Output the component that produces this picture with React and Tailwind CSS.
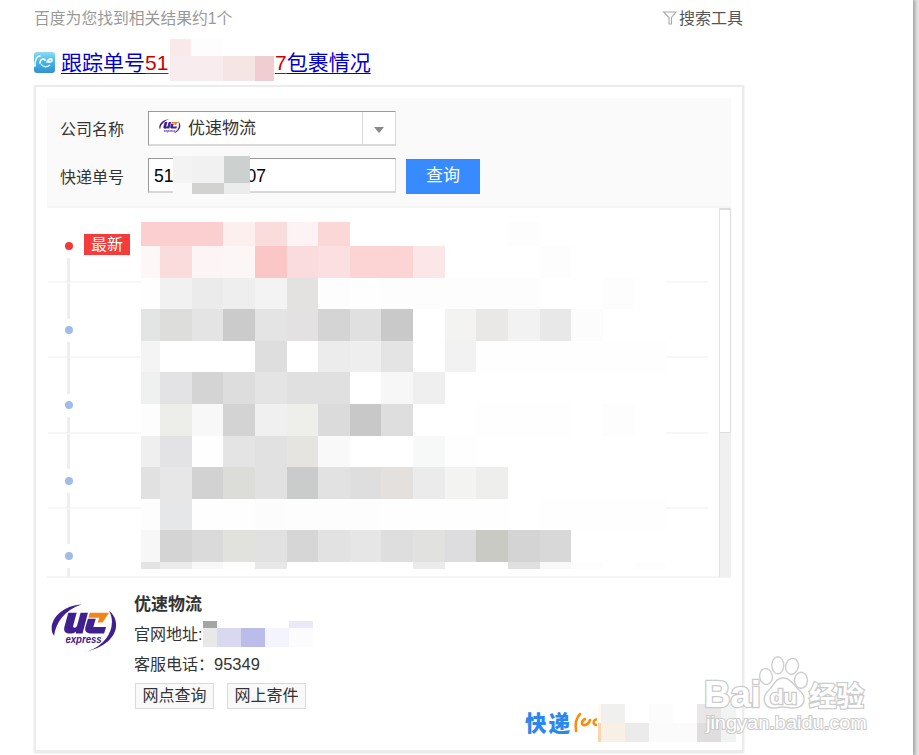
import clsx from 'clsx';

// pixelated blocks covering the tracking details, row by row
const W = '#ffffff';
const mosaicRows = [
  ['#fbcfd0', '#fbcfd0', '#fbcfd0', '#feefef', '#fbdcdd', '#fdf3f4', '#fcd7d7', W, W, W, W, W, '#fdfdfd', W, W, W, W],
  ['#fdf8f7', '#fadcdd', '#fdf4f6', '#fdf6f6', '#fbc6c6', '#fbdcde', '#fcdfe0', '#fbd4d3', '#fbd4d3', '#fce7e8', W, W, W, '#fdfdfd', W, W, W],
  ['#fefefe', '#f1f1f1', '#ebebeb', '#eeeeee', '#f3f3f3', '#e3e2e0', '#fdfdfd', '#fefefe', '#fdfdfd', '#fdfdfd', '#fdfdfd', '#fdfdfd', '#fdfdfd', W, W, '#fdfdfd', W],
  ['#e2e5e4', '#dddddb', '#e4e4e4', '#cbcbcb', '#e4e4e4', '#e3e1e2', '#d4d4d4', '#e0e0e0', '#c9c9c9', W, '#f3f3f1', '#e9e8e6', '#f2f2f2', '#e8e8e8', '#fcfcfc', W, W],
  ['#f4f4f4', W, W, W, '#dedede', W, '#ececec', '#eeeeee', '#e4e4e4', W, '#f2f2f2', '#fefefe', '#fefefe', '#fefefe', '#fefefe', '#fefefe', '#fefefe'],
  ['#eef1f0', '#e3e3e6', '#d4d4d4', '#dddddd', '#e4e4e4', '#e0e0e0', '#e0e0e0', W, '#f7f7f7', '#efefef', W, W, W, W, W, W, W],
  ['#fdfdfd', '#ededea', '#f8f8f8', '#d3d3d3', '#f0f0f0', '#eeeeeb', '#dbdbdb', '#c8c8c8', '#dedede', W, W, '#fefefe', '#fefefe', '#fefefe', W, '#fdfdfd', W],
  ['#efefef', '#e3e3e6', '#fefefe', '#e4e4e4', '#e1e1e1', '#e6e4e1', '#f9f9f9', W, W, '#f6f9f8', '#fefefe', W, W, W, W, W, W],
  ['#e1e1e1', '#e7e7e7', '#d2d2d2', '#dcdcd9', '#e1e1e1', '#c9cccb', '#e2e2e2', '#dedede', '#e4e0dd', '#ebebeb', '#f3f3f1', '#eeeeec', W, W, W, W, W],
  ['#fdfdfd', '#e5e7e9', '#fefefe', '#fefefe', '#fcfcfc', '#fdfdfd', '#fdfdfd', '#fdfdfd', '#fefefe', '#fefefe', '#fefefe', '#fefefe', W, '#fefefe', '#fefefe', '#fefefe', '#fefefe'],
  ['#f7f7f7', '#d4d4d4', '#dadada', '#e1e1de', '#e1e1e1', '#d6d6d6', '#e2e2e2', '#e6e6e6', '#dedede', '#e1e1df', '#dddddf', '#cacac4', '#d4d4d4', '#d8d8d8', W, W, W],
  ['#e4e4e4', '#ebebeb', '#f8f8f8', '#fefefe', '#e8e8e8', W, W, W, W, '#ebebeb', W, W, '#e0e0e0', '#f8f8f8', '#fdfdfd', W, '#fdfdfd'],
];

const steps = [
  { latest: true, row: 'h-[75px]', top: 'h-0 mb-[34px]', bottom: 'h-[24px]' },
  { row: 'h-[75px]', top: 'h-[36px] mb-[7px]', bottom: 'h-[16px]' },
  { row: 'h-[76px]', top: 'h-[36px] mb-[7px]', bottom: 'h-[16px]' },
  { row: 'h-[75px]', top: 'h-[35px] mb-[8px]', bottom: 'h-[15px]' },
  { row: 'h-[69px]', top: 'h-[35px] mb-[8px]', bottom: 'h-[9px]', last: true },
];

const Mosaic = () => (
  <div className="absolute left-[94px] top-[14px] grid h-[347px] w-[524px] grid-cols-[19px_repeat(16,31.65px)] grid-rows-[24px_repeat(10,1fr)_7px] bg-white">
    {mosaicRows.flat().map((color, i) => (
      <span key={i} style={{ backgroundColor: color }} />
    ))}
  </div>
);

const UcLogo = ({ className }) => (
  <svg viewBox="0 0 68 50" className={className}>
    <path d="M31 .5C14 1 .5 13 .5 25c0 3 .5 5 2.500 7.500C4.500 19 14 6 31 .5Z" fill="#40208f" />
    <path d="M59 7c12 9 12 32-22 41.500C54 42 62 30 62 18c0-4-1-7-3-11Z" fill="#40208f" />
    <path d="M17.500 9h8.500l-3.500 13c-.8 3 3 3 4 0L30 9h7.500l-5.500 21h-7l.5-2c-2 1.600-4 2.200-6.500 2.200-5 0-6.500-3-5.500-7Z" fill="#40208f" />
    <path d="M37.500 15h8l-2.500 8.500h13L54 30H40c-4.500 0-6-3-5-6.500Z" fill="#40208f" />
    <path d="M39.500 9H59l-6.500 10h-5l1.500-5H38Z" fill="#f28418" />
    <text x="14.500" y="39.500" fontSize="11" fontWeight="bold" fontStyle="italic" textLength="37" lengthAdjust="spacingAndGlyphs" fill="#40208f">express</text>
  </svg>
);

const SiteIcon = () => (
  <svg viewBox="0 0 21 21" className="-mt-[2px] mr-[6px] h-[21px] w-[21px] shrink-0">
    <defs>
      <linearGradient id="site" x1="0" y1="0" x2="0" y2="1">
        <stop offset="0" stopColor="#8fdcf5" />
        <stop offset=".45" stopColor="#43b8e8" />
        <stop offset="1" stopColor="#3590d0" />
      </linearGradient>
    </defs>
    <rect width="21" height="21" rx="3" fill="url(#site)" />
    <path d="M1 14C1 8 3 4 6 4" fill="none" stroke="#fff" strokeWidth="1.7" strokeLinecap="round" />
    <path d="M6 11c0-4 4-5 5-3M13 10c1-3 5-4 5-2s-3 3-4 1" fill="none" stroke="#fff" strokeWidth="1.7" strokeLinecap="round" />
    <path d="M7 12c2 3.500 6 3.500 9 1" fill="none" stroke="#d9f4ff" strokeWidth="1.5" />
  </svg>
);

const Watermark = () => (
  <svg viewBox="0 0 170 84" className="absolute left-[702px] top-[652px] h-[84px] w-[170px]">
    <g fill="#fff" fillOpacity=".9" stroke="#cfcfcf" strokeWidth="1.4">
      <ellipse cx="64" cy="24.500" rx="6.300" ry="8" transform="rotate(-8 64 24.500)" />
      <ellipse cx="75.800" cy="13.300" rx="6" ry="8.500" />
      <ellipse cx="90" cy="14.300" rx="6.300" ry="8" transform="rotate(14 90 14.300)" />
      <ellipse cx="99" cy="28.300" rx="6.500" ry="8" />
      <path d="M81 26c-8 0-9 8-15 13-6 6-5 17 5 17 5 0 6-1 10-1s6 1 11 1c11 0 13-11 6-17-6-5-9-13-17-13Z" />
    </g>
    <g fill="#fff" stroke="#cccccc" strokeWidth="2.600" paintOrder="stroke" fontWeight="bold">
      <text x="2" y="54.500" fontSize="36" textLength="57" lengthAdjust="spacingAndGlyphs">Bai</text>
      <text x="68" y="52" fontSize="20" textLength="27" lengthAdjust="spacingAndGlyphs">du</text>
      <text x="107" y="53.500" fontSize="27.500" textLength="55" lengthAdjust="spacingAndGlyphs">经验</text>
    </g>
    <text x="4" y="77" fontSize="18" textLength="161" lengthAdjust="spacingAndGlyphs" fill="#fff" stroke="#cccccc" strokeWidth="2" paintOrder="stroke">jingyan.baidu.com</text>
  </svg>
);

const SearchForm = () => (
  <div className="h-[110px] border-b-2 border-[#f5f5f5] bg-[#fafafa] pl-[13px] pt-[13px]">
    <div className="flex h-[35px] items-center">
      <span className="w-[88px] pt-[2px]">公司名称</span>
      <div className="flex h-[35px] w-[248px] border border-b-2 border-[#d8d8d8] border-t-[#999] border-l-[#999] bg-white">
        <div className="flex flex-1 items-center border-r border-[#d8d8d8] pl-[10px]">
          <UcLogo className="mr-[7px] mt-[-2px] h-[16px] w-[22px]" />
          <span className="mt-[2px] text-[17px]">优速物流</span>
        </div>
        <div className="flex w-[32px] items-center justify-center">
          <span className="mt-[3px] border-x-[5px] border-t-[6px] border-x-transparent border-t-[#888]" />
        </div>
      </div>
    </div>
    <div className="mt-[12px] flex h-[35px] items-center">
      <span className="w-[88px] pt-[5px]">快递单号</span>
      <div className="relative flex h-[35px] w-[248px] items-center border border-b-2 border-[#d8d8d8] border-t-[#999] border-l-[#999] bg-white pl-[5px] pt-[2px] text-[17.500px] text-black">
        <span>51</span>
        <span className="ml-[73px]">07</span>
        <div className="absolute left-[24px] top-[-3px] grid h-[38px] w-[77px] grid-cols-[19px_32px_26px] grid-rows-[27px_11px]">
          <span className="bg-[#f3f3f3]" />
          <span className="bg-[#f1f1f1]" />
          <span className="bg-[#ccd0cf]" />
          <span className="bg-[#fafafa]" />
          <span className="bg-[#d2d3d1]" />
          <span className="bg-[#ececec]" />
        </div>
      </div>
      <button className="ml-[10px] mt-px h-[35px] w-[74px] bg-[#388bff] text-[17px] text-white">查询</button>
    </div>
  </div>
);

const Timeline = () => (
  <div className="relative flex h-[370px] border-b-2 border-[#f5f5f5]">
    <ul className="ml-px w-[660px]">
      {steps.map((step, i) => (
        <li key={i} className={clsx('flex', step.row, !step.last && 'border-b-2 border-[#f7f7f7]')}>
          <div className="ml-[16px] flex w-[9px] flex-col items-center">
            <span className={clsx('w-[3px] shrink-0 bg-[#eee]', step.top)} />
            <span className={clsx('h-[8px] w-[8px] shrink-0 rounded-full', step.latest ? 'bg-[#f43838]' : 'bg-[#a0bde7]')} />
            <span className={clsx('mt-[8px] w-[3px] shrink-0 bg-[#eee]', step.bottom)} />
          </div>
          {step.latest && (
            <span className="ml-[11px] mt-[26px] h-[21px] w-[46px] bg-[#f43c3c] text-center leading-[21px] text-white">最新</span>
          )}
        </li>
      ))}
    </ul>
    <div className="ml-[11px] h-[369px] w-[12px] border-l border-[#e2e2e2] bg-[#f0f0f0]">
      <div className="h-[225px] w-[11px] border border-t-2 border-l-0 border-[#ddd] bg-white" />
    </div>
    <Mosaic />
  </div>
);

const CompanyInfo = () => (
  <div className="relative flex h-[172px] pt-[16px]">
    <UcLogo className="ml-[4px] mt-[10px] h-[49px] w-[67px]" />
    <div className="ml-[16px]">
      <div className="h-[23px] text-[17px] font-bold leading-[22px]">优速物流</div>
      <div className="mt-[3px] flex h-[30px] items-center">
        <span className="w-[69px] whitespace-nowrap">官网地址:</span>
        <div className="mt-[-3px] grid h-[26px] w-[110px] grid-cols-[14px_24px_24px_24px_24px] grid-rows-[7px_19px]">
          <span className="bg-[#a5a5a5]" />
          <span />
          <span />
          <span />
          <span className="bg-[#eae9f8]" />
          <span className="bg-[#e8e8e8]" />
          <span className="bg-[#d8d8f1]" />
          <span className="bg-[#bcbceb]" />
          <span className="bg-[#f4f4ff]" />
          <span className="bg-[#fcfcff]" />
        </div>
      </div>
      <div className="h-[30px] leading-[29px]">客服电话：<span className="text-[16.500px]">95349</span></div>
      <div className="ml-px mt-[3px] flex gap-[13px]">
        <button className="h-[26px] w-[79px] border border-[#d9d9d9] bg-[#f9f9f9] leading-[24px]">网点查询</button>
        <button className="h-[26px] w-[79px] border border-[#d9d9d9] bg-[#f9f9f9] leading-[24px]">网上寄件</button>
      </div>
    </div>
    <div className="absolute left-[478px] top-[125px] flex">
      <span className="mt-[9px] h-[24px] w-[48px] whitespace-nowrap text-[21.500px] font-black leading-[24px] tracking-[2px] text-[#2b87ef]">快递</span>
      <svg viewBox="0 0 25 24" className="mt-[8px] h-[24px] w-[25px]">
        <path d="M7 3C3 7 2 13 3 20" fill="none" stroke="#ff8a08" strokeWidth="2.500" strokeLinecap="round" />
        <path d="M12 8c-4 2-4 7 0 6 3-.5 4-2 5-5" fill="none" stroke="#ff8a08" strokeWidth="2.600" strokeLinecap="round" />
        <path d="M24 8.500c-4-.5-5 5.500 0 5.500" fill="none" stroke="#ff8a08" strokeWidth="2.500" />
      </svg>
      <div className="mt-px grid h-[38px] w-[138px] grid-cols-[3px_24px_24px_24px_24px_24px_15px] grid-rows-[19px_19px]">
        <span className="bg-[#fdf8f0]" />
        <span className="bg-[#f0f0ef]" />
        <span />
        <span className="bg-[#fcfcfc]" />
        <span />
        <span className="bg-[#e9e7e7]" />
        <span className="bg-[#f2f4f4]" />
        <span className="bg-[#fad4ad]" />
        <span className="bg-[#f8efe5]" />
        <span className="bg-[#ebebeb]" />
        <span className="bg-[#fbfbfb]" />
        <span className="bg-[#fbfbfb]" />
        <span className="bg-[#dfdddd]" />
        <span className="bg-[#f1f2f2]" />
      </div>
    </div>
  </div>
);

export default function App() {
  return (
    <div className="relative flex h-[755px] w-[919px] overflow-hidden bg-[#e8e8e8] font-['Liberation_Sans','Noto_Sans_CJK_SC',sans-serif] text-[16px] leading-[20px] text-[#333]">
      <main className="h-[755px] w-[913px] bg-white pl-[34px] pt-[8px] shadow-[1px_0_4px_1px_#999]">
        <div className="flex h-[20px] w-[709px] justify-between">
          <span className="pt-px text-[15.8px] text-[#999]">百度为您找到相关结果约1个</span>
          <span className="flex items-center text-[#555]">
            <svg viewBox="0 0 16 16" className="mr-px h-[16px] w-[16px]">
              <path d="M1.500 2h12.500L9.500 7.500v6.500H7V7.500Z" fill="none" stroke="#aaa" strokeWidth="1.1" />
            </svg>
            <span className="pt-px">搜索工具</span>
          </span>
        </div>
        <h3 className="relative mt-[20px] flex h-[30px] items-center text-[21px] leading-[30px] text-[#0000cc]">
          <SiteIcon />
          <span className="underline decoration-1 underline-offset-[3px]">跟踪单号</span>
          <span className="w-[130px] text-[#cc0000] underline decoration-1 underline-offset-[3px]">51</span>
          <span className="text-[#cc0000] underline decoration-1 underline-offset-[3px]">7</span>
          <span className="underline decoration-1 underline-offset-[3px]">包裹情况</span>
          <div className="absolute left-[136px] top-[-9px] grid h-[42px] w-[104px] grid-cols-[21px_32px_32px_19px] grid-rows-[17px_25px]">
            <span className="bg-[#f9e9ea]" />
            <span className="bg-[#fdfdfe]" />
            <span />
            <span />
            <span className="bg-[#f8ecee]" />
            <span className="bg-[#f8ecee]" />
            <span className="bg-[#f5e5e3]" />
            <span className="bg-[#f0cdd1]" />
          </div>
        </h3>
        <section className="mt-[7px] h-[667px] w-[710px] border-2 border-[#ececec] px-[11px] pt-[11px] shadow-[0_1px_2px_#e2e2e2]">
          <SearchForm />
          <Timeline />
          <CompanyInfo />
        </section>
      </main>
      <Watermark />
    </div>
  );
}
